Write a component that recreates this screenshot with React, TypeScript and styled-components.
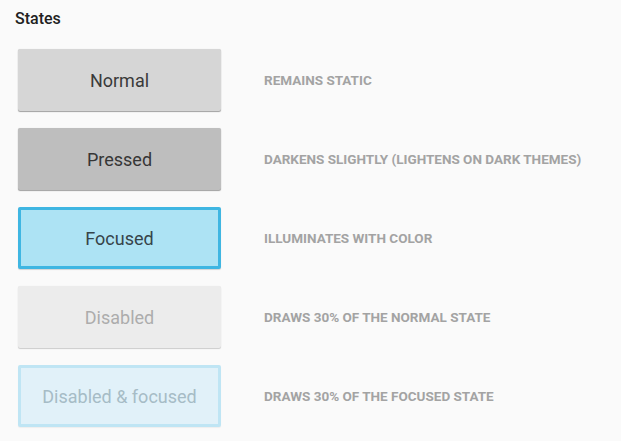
import React from 'react';
import styled, { createGlobalStyle, css } from 'styled-components';

const GlobalStyle = createGlobalStyle`
  html, body {
    margin: 0;
    padding: 0;
    background: #fafafa;
  }
  body {
    font-family: Roboto, 'Noto Sans', sans-serif;
  }
`;

type Variant = 'normal' | 'pressed' | 'focused' | 'disabled' | 'disabledFocused';

const Page = styled.div`
  padding: 9px 0 0 15px;
  width: 621px;
  height: 441px;
  box-sizing: border-box;
`;

const Title = styled.h3`
  margin: 0 0 20px 0;
  font-size: 16px;
  line-height: 20px;
  font-weight: 500;
  color: #212121;
`;

const List = styled.div`
  display: flex;
  flex-direction: column;
  gap: 17px;
  padding-left: 3px;
`;

const Row = styled.div`
  display: grid;
  grid-template-columns: 203px 1fr;
  column-gap: 43px;
  align-items: center;
`;

const variants = {
  normal: css`
    background: #d6d6d6;
    color: #3a3a3a;
    box-shadow: 0 1px 1px rgba(0, 0, 0, 0.35), 0 0 1px rgba(0, 0, 0, 0.15);
  `,
  pressed: css`
    background: #bebebe;
    color: #363636;
    box-shadow: 0 1px 1px rgba(0, 0, 0, 0.35), 0 0 1px rgba(0, 0, 0, 0.15);
  `,
  focused: css`
    background: #ade3f4;
    color: #36444a;
    border: 3px solid #3fb6e2;
    box-shadow: 0 1px 1px rgba(0, 0, 0, 0.15);
  `,
  disabled: css`
    background: #ececec;
    color: #acacac;
    box-shadow: 0 1px 1px rgba(0, 0, 0, 0.18), 0 0 1px rgba(0, 0, 0, 0.08);
  `,
  disabledFocused: css`
    background: #e1f1f9;
    color: #a6bcc6;
    border: 3px solid #bfe5f4;
    box-shadow: 0 1px 1px rgba(0, 0, 0, 0.05);
  `,
};

const StateButton = styled.div<{ $variant: Variant }>`
  box-sizing: border-box;
  height: 62px;
  border-radius: 2px;
  display: flex;
  align-items: center;
  justify-content: center;
  font-size: 18px;
  font-weight: 400;
  ${({ $variant }) => variants[$variant]}
`;

const Caption = styled.div`
  font-size: 13.5px;
  font-weight: 700;
  color: #a3a3a3;
  text-transform: uppercase;
`;

const states: { variant: Variant; label: string; caption: string }[] = [
  { variant: 'normal', label: 'Normal', caption: 'Remains static' },
  { variant: 'pressed', label: 'Pressed', caption: 'Darkens slightly (lightens on dark themes)' },
  { variant: 'focused', label: 'Focused', caption: 'Illuminates with color' },
  { variant: 'disabled', label: 'Disabled', caption: 'Draws 30% of the normal state' },
  { variant: 'disabledFocused', label: 'Disabled & focused', caption: 'Draws 30% of the focused state' },
];

const App: React.FC = () => (
  <Page>
    <GlobalStyle />
    <Title>States</Title>
    <List>
      {states.map((s) => (
        <Row key={s.variant}>
          <StateButton $variant={s.variant}>{s.label}</StateButton>
          <Caption>{s.caption}</Caption>
        </Row>
      ))}
    </List>
  </Page>
);

export default App;
